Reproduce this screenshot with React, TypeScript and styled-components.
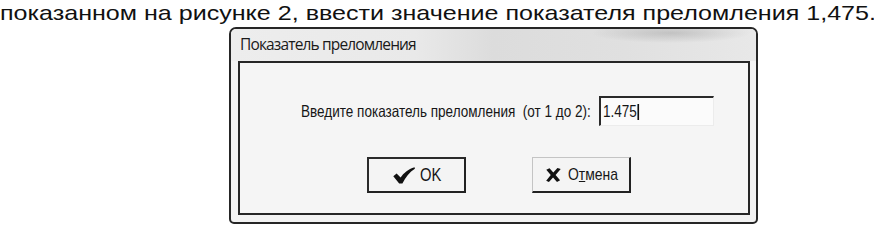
import React from "react";
import styled, { createGlobalStyle } from "styled-components";

const Global = createGlobalStyle`
  html, body { margin: 0; padding: 0; background: #ffffff; }
  body { font-family: "Liberation Sans", Arial, sans-serif; color: #111; }
`;

const Page = styled.div`
  width: 874px;
  height: 226px;
  display: flex;
  flex-direction: column;
  overflow: hidden;
`;

const Heading = styled.p`
  margin: 0;
  width: max-content;
  height: 27px;
  font-family: "Liberation Sans", Arial, sans-serif;
  font-size: 21px;
  line-height: 25px;
  color: #111;
  white-space: nowrap;
  transform: scaleX(1.194);
  transform-origin: 0 0;
`;

const DialogRow = styled.div`
  display: flex;
  padding-left: 229px;
`;

const Dialog = styled.div`
  width: 529px;
  height: 197px;
  box-sizing: border-box;
  border: 2px solid #262626;
  border-radius: 7px 7px 5px 5px;
  background: #f2f2f2;
  display: flex;
  flex-direction: column;
  padding: 0 6px 7px 7px;
`;

const TitleBar = styled.div`
  height: 32px;
  display: flex;
  align-items: center;
  margin: 0 -6px 0 -7px;
  padding: 0 0 2px 9px;
  box-sizing: border-box;
  border-radius: 5px 5px 0 0;
  font-family: "Open Sans", "Noto Sans", sans-serif;
  font-size: 15.5px;
  letter-spacing: -0.85px;
  color: #1a1a1a;
  background:
    radial-gradient(ellipse 80px 10px at 440px 4px, rgba(110,110,110,0.28), rgba(0,0,0,0)),
    linear-gradient(90deg, #ededed 0%, #e9e9e9 35%, #dcdcdc 50%, #e0e0e0 75%, #e8e8e8 100%);
`;

const Panel = styled.div`
  flex: 1;
  box-sizing: border-box;
  border: 2px solid #262626;
  background: #f5f5f5;
  display: flex;
  flex-direction: column;
  padding: 33px 0 0 61px;
`;

const FieldRow = styled.div`
  display: flex;
  align-items: center;
  height: 30px;
`;

/* The scanned dialog uses a condensed system font: Arial squeezed horizontally. */
const Squeezed = styled.span<{ $size: number }>`
  display: inline-block;
  font-family: "Liberation Sans", Arial, sans-serif;
  font-size: ${(p) => p.$size}px;
  white-space: nowrap;
  transform: scaleX(0.82);
  transform-origin: 0 50%;
  color: #161616;
`;

const Label = styled.div`
  width: 298px;
  display: flex;
  align-items: center;
`;

const Input = styled.div`
  width: 115px;
  height: 30px;
  box-sizing: border-box;
  border-top: 2px solid #2a2a2a;
  border-left: 2px solid #2a2a2a;
  border-right: 1px solid #ececec;
  border-bottom: 1px solid #ececec;
  background: #fbfbfb;
  padding: 0 0 1px 2px;
  display: flex;
  align-items: center;
  overflow: hidden;
`;

const Caret = styled.span`
  display: inline-block;
  width: 2px;
  height: 16px;
  background: #111;
  margin-left: 1px;
  vertical-align: -3px;
`;

const ButtonRow = styled.div`
  display: flex;
  margin-top: 31px;
  padding-left: 66px;
  gap: 66px;
`;

const Button = styled.div<{ $default?: boolean; $pad: number; $gap: number }>`
  width: 99px;
  height: 36px;
  box-sizing: border-box;
  display: flex;
  align-items: center;
  padding-left: ${(p) => p.$pad}px;
  gap: ${(p) => p.$gap}px;
  background: #f4f4f4;
  border-top: ${(p) => (p.$default ? "2px solid #2a2a2a" : "1px solid #c4c4c4")};
  border-left: ${(p) => (p.$default ? "2px solid #2a2a2a" : "1px solid #c4c4c4")};
  border-right: 2px solid #222;
  border-bottom: 2px solid #222;
  overflow: hidden;
`;

const Mnemonic = styled.span`
  text-decoration: underline;
  text-underline-offset: 1px;
`;

const Check = () => (
  <svg width="22" height="17" viewBox="0 0 22 17">
    <path
      d="M0.3 9.3 L3.6 6.6 L7.6 10.6 C10.6 6.2 15 2.3 21.6 0.3 L21.9 1.8 C16.5 5.2 12.7 10.2 9.4 16.6 L6.2 16.6 Z"
      fill="#111"
    />
  </svg>
);

const Cross = () => (
  <svg width="17" height="16" viewBox="0 0 17 16">
    <path
      d="M0.3 2 L4 0.2 L8.3 5.3 L13 0 L16.7 1.3 L10.9 8.1 L16 14 L12.5 16 L8 10.8 L3.3 16 L0.2 14.5 L5.4 8.1 Z"
      fill="#111"
    />
  </svg>
);

export default function App() {
  return (
    <>
      <Global />
      <Page>
        <Heading>показанном на рисунке 2, ввести значение показателя преломления 1,475.</Heading>
        <DialogRow>
          <Dialog>
            <TitleBar>Показатель преломления</TitleBar>
            <Panel>
              <FieldRow>
                <Label>
                  <Squeezed $size={16.5}>Введите показатель преломления&nbsp; (от 1 до 2):</Squeezed>
                </Label>
                <Input>
                  <Squeezed $size={16.5}>
                    1.475
                    <Caret />
                  </Squeezed>
                </Input>
              </FieldRow>
              <ButtonRow>
                <Button $default $pad={24} $gap={5}>
                  <Check />
                  <Squeezed $size={18}>OK</Squeezed>
                </Button>
                <Button $pad={13} $gap={7}>
                  <Cross />
                  <Squeezed $size={17}>
                    О<Mnemonic>т</Mnemonic>мена
                  </Squeezed>
                </Button>
              </ButtonRow>
            </Panel>
          </Dialog>
        </DialogRow>
      </Page>
    </>
  );
}
